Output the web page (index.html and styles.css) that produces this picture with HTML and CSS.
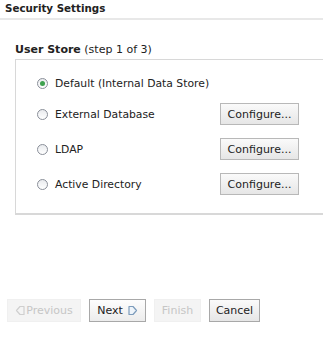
FILE: index.html
```html
<!DOCTYPE html>
<html lang="en">
<head>
    <meta charset="UTF-8">
    <title>Security Settings</title>
    <link rel="stylesheet" href="styles.css">
</head>
<body>
    <div class="page-title">Security Settings</div>

    <div class="wizard">
        <div class="step-title"><b>User Store</b> (step 1 of 3)</div>

        <div class="store-box">
            <div class="option first">
                <label><span class="radio checked"></span>Default (Internal Data Store)</label>
            </div>
            <div class="option">
                <label><span class="radio"></span>External Database</label>
                <button class="btn">Configure...</button>
            </div>
            <div class="option">
                <label><span class="radio"></span>LDAP</label>
                <button class="btn">Configure...</button>
            </div>
            <div class="option">
                <label><span class="radio"></span>Active Directory</label>
                <button class="btn">Configure...</button>
            </div>
        </div>
    </div>

    <div class="nav-buttons">
        <button class="btn nav disabled prev">
            <svg class="arrow" width="10" height="11" viewBox="0 0 10 11"><path d="M9 1.5 H5 L1.5 5.5 L5 9.5 H9 Z" /></svg>Previous
        </button>
        <button class="btn nav next">Next
            <svg class="arrow" width="10" height="11" viewBox="0 0 10 11"><path d="M1 1.5 H5 L8.5 5.5 L5 9.5 H1 Z" /></svg>
        </button>
        <button class="btn nav disabled finish">Finish</button>
        <button class="btn nav cancel">Cancel</button>
    </div>
</body>
</html>
```

FILE: styles.css
```css
* {
    margin: 0;
    padding: 0;
    box-sizing: border-box;
}

body {
    font-family: "DejaVu Sans", Verdana, sans-serif;
    font-size: 10.8px;
    color: #222;
    background: #fff;
    width: 323px;
    height: 341px;
    overflow: hidden;
}

.page-title {
    font-weight: bold;
    font-size: 10.3px;
    padding: 2px 5px 3px;
    border-bottom: 2px solid #e8e8e8;
    line-height: 13px;
}

.wizard {
    padding: 23px 0 0 15px;
}

.step-title {
    font-size: 11px;
    line-height: 13px;
    padding-bottom: 3px;
}

.store-box {
    width: 308px;
    height: 156px;
    border: 1px solid #d8d8d8;
    border-bottom-width: 2px;
    border-right: none;
    padding: 17px 0 0 21px;
    display: flex;
    flex-direction: column;
    gap: 13px;
}

.option {
    display: flex;
    align-items: center;
    height: 22px;
}

.option.first {
    height: 13px;
}

.option label {
    display: flex;
    align-items: center;
    width: 183px;
}

.radio {
    width: 11px;
    height: 11px;
    border: 1px solid #8a8f99;
    border-radius: 50%;
    background: linear-gradient(#e9ebee, #fff);
    margin-right: 7px;
    position: relative;
}

.radio.checked::after {
    content: "";
    position: absolute;
    left: 2px;
    top: 2px;
    width: 5px;
    height: 5px;
    border-radius: 50%;
    background: #3fa24f;
}

.btn {
    font-family: "DejaVu Sans", Verdana, sans-serif;
    font-size: 11px;
    color: #222;
    height: 22px;
    padding: 0 6px;
    border: 1px solid #b8b8b8;
    background: linear-gradient(#fafafa, #e6e6e6);
    display: inline-flex;
    align-items: center;
    justify-content: center;
}

.option .btn {
    width: 79px;
}

.nav-buttons {
    display: flex;
    gap: 8px;
    padding: 84px 0 0 7px;
    align-items: center;
}

.btn.nav {
    height: 23px;
}

.btn.disabled {
    color: #c6c6c6;
    border-color: #f0f0f0;
    background: #f4f4f4;
}

.prev {
    width: 74px;
    padding: 0 2px;
}

.next {
    width: 57px;
    height: 25px;
    border-color: #a8a8a8;
    background: linear-gradient(#fdfdfd, #ececec);
}

.finish {
    width: 47px;
}

.cancel {
    width: 51px;
    border-color: #a8a8a8;
}

.arrow path {
    fill: none;
    stroke: #cfcfcf;
    stroke-width: 1.2;
    stroke-linejoin: round;
}

.prev .arrow {
    margin-right: 1px;
}

.next .arrow {
    margin-left: 5px;
}

.next .arrow path {
    stroke: #7d9cbc;
    fill: #eef4fa;
}
```
